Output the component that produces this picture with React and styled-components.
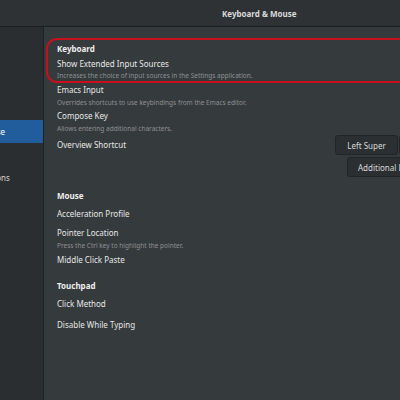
import React from 'react';
import styled, { createGlobalStyle } from 'styled-components';

const GlobalStyle = createGlobalStyle`
  html, body {
    margin: 0;
    padding: 0;
    background: #353a3d;
  }
  body {
    font-family: 'Noto Sans', 'DejaVu Sans', sans-serif;
    color: #eeeeec;
  }
`;

const Window = styled.div`
  width: 400px;
  height: 400px;
  display: flex;
  flex-direction: column;
  overflow: hidden;
  background: #353a3d;
`;

const HeaderBar = styled.header`
  height: 26px;
  flex-shrink: 0;
  display: flex;
  align-items: center;
  background: #2e3235;
  border-bottom: 1px solid #1d2022;
`;

const HeaderTitle = styled.div`
  padding-left: 222px;
  font-size: 8px;
  font-weight: bold;
  color: #d9dbdb;
`;

const Body = styled.div`
  flex: 1;
  display: flex;
  min-height: 0;
`;

const Sidebar = styled.nav`
  width: 43px;
  flex-shrink: 0;
  background: #2b2e30;
  border-right: 1px solid #1f2224;
  overflow: hidden;
  padding-top: 1px;
`;

const SideItem = styled.div`
  height: 23px;
  display: flex;
  align-items: center;
  background: ${({ $active }) => ($active ? '#215d9c' : 'transparent')};
  color: ${({ $active }) => ($active ? '#ffffff' : '#d3d5d5')};
  font-size: 8px;
  white-space: nowrap;
`;

const SideLabel = styled.span`
  margin-left: -66px;
`;

const Main = styled.main`
  flex: 1;
  overflow: hidden;
  padding-left: 2px;
`;

const Highlight = styled.div`
  margin-top: 11px;
  margin-right: -30px;
  border: 2px solid #c8101c;
  border-radius: 11px;
  padding: 1px 0 0 9px;
`;

const Content = styled.div`
  padding-left: 11px;
`;

const Heading = styled.div`
  font-size: 8px;
  font-weight: bold;
  line-height: ${({ $lh }) => $lh || 14}px;
  margin-top: ${({ $mt }) => $mt || 0}px;
  color: #eeeeec;
`;

const Title = styled.div`
  font-size: 8px;
  line-height: ${({ $lh }) => $lh || 14}px;
  margin-top: ${({ $mt }) => $mt || 0}px;
  color: #e6e7e6;
  white-space: nowrap;
`;

const Desc = styled.div`
  font-size: 6.5px;
  line-height: ${({ $lh }) => $lh || 12}px;
  color: #8d9192;
  white-space: nowrap;
`;

const ShortcutRow = styled.div`
  display: flex;
  align-items: flex-start;
`;

const ShortcutTitle = styled(Title)`
  flex: 1;
  margin-top: 3px;
`;

const ButtonColumn = styled.div`
  width: 65px;
  flex-shrink: 0;
  display: flex;
  flex-direction: column;
  align-items: flex-start;
  gap: 2px;
`;

const ButtonLine = styled.div`
  display: flex;
  gap: 1px;
  margin-left: ${({ $indent }) => $indent || 0}px;
`;

const Button = styled.div`
  height: 20px;
  box-sizing: border-box;
  width: ${({ $w }) => $w}px;
  flex-shrink: 0;
  display: flex;
  align-items: center;
  padding-left: ${({ $pl }) => $pl || 0}px;
  justify-content: ${({ $pl }) => ($pl ? 'flex-start' : 'center')};
  background: #2b2f32;
  border: 1px solid #222527;
  border-radius: 3px;
  font-size: 8px;
  color: #d8dada;
  white-space: nowrap;
`;

const sideItems = [
  'Appearance',
  'Desktop',
  'Extensions',
  'Fonts',
  'Keyboard & Mouse',
  'Power',
  'Startup Applications',
  'Top Bar',
  'Windows',
  'Workspaces',
];

const App = () => (
  <>
    <GlobalStyle />
    <Window>
      <HeaderBar>
        <HeaderTitle>Keyboard &amp; Mouse</HeaderTitle>
      </HeaderBar>
      <Body>
        <Sidebar>
          {sideItems.map((item) => (
            <SideItem key={item} $active={item === 'Keyboard & Mouse'}>
              <SideLabel>{item}</SideLabel>
            </SideItem>
          ))}
        </Sidebar>
        <Main>
          <Highlight>
            <Heading $lh={15}>Keyboard</Heading>
            <Title $lh={15}>Show Extended Input Sources</Title>
            <Desc $lh={10}>Increases the choice of input sources in the Settings application.</Desc>
          </Highlight>
          <Content>
            <Title>Emacs Input</Title>
            <Desc>Overrides shortcuts to use keybindings from the Emacs editor.</Desc>
            <Title>Compose Key</Title>
            <Desc>Allows entering additional characters.</Desc>
            <ShortcutRow>
              <ShortcutTitle>Overview Shortcut</ShortcutTitle>
              <ButtonColumn>
                <ButtonLine>
                  <Button $w={63}>Left Super</Button>
                  <Button $w={40} />
                </ButtonLine>
                <ButtonLine $indent={12}>
                  <Button $w={90} $pl={10}>Additional Layout Option Shortcut</Button>
                </ButtonLine>
              </ButtonColumn>
            </ShortcutRow>
            <Heading $mt={12}>Mouse</Heading>
            <Title $mt={4}>Acceleration Profile</Title>
            <Title $mt={5}>Pointer Location</Title>
            <Desc>Press the Ctrl key to highlight the pointer.</Desc>
            <Title $mt={1}>Middle Click Paste</Title>
            <Heading $mt={12}>Touchpad</Heading>
            <Title $mt={4}>Click Method</Title>
            <Title $mt={7}>Disable While Typing</Title>
          </Content>
        </Main>
      </Body>
    </Window>
  </>
);

export default App;
